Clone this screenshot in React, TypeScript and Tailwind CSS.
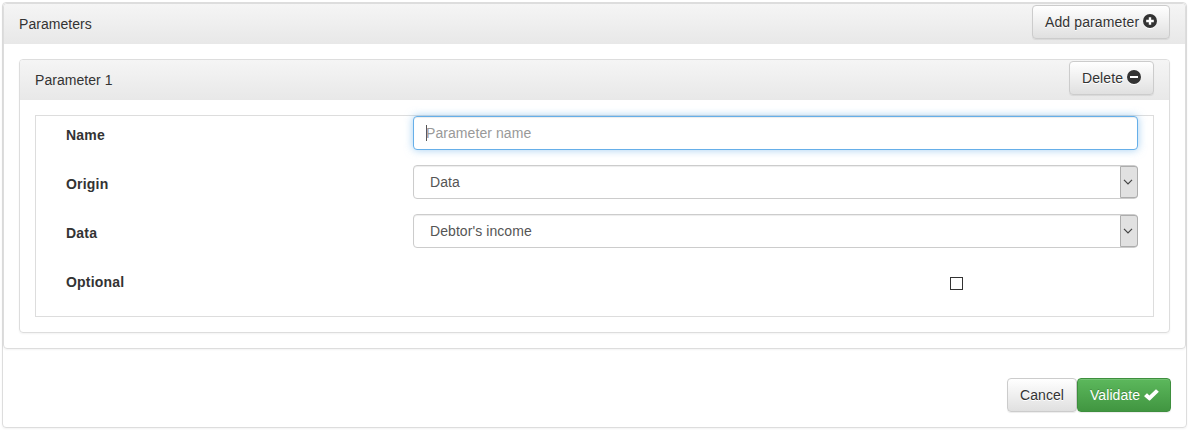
import type { ReactNode } from "react";

const buttonBase =
  "flex h-[34px] shrink-0 items-center rounded-[4px] border pl-3 text-[14px] leading-5 whitespace-nowrap";
const defaultButton =
  "border-[#ccc] bg-gradient-to-b from-white to-[#e0e0e0] text-[#333] [text-shadow:0_1px_0_#fff] shadow-[inset_0_1px_0_rgba(255,255,255,0.15),0_1px_1px_rgba(0,0,0,0.075)]";

function SignIcon({ plus = false }: { plus?: boolean }) {
  return (
    <svg width="14" height="14" viewBox="0 0 14 14" className="relative -top-px drop-shadow-[0_1px_0_#fff]">
      <circle cx="7" cy="7" r="7" fill="#333" />
      <path d={plus ? "M5.8 3.2h2.4v2.6h2.6v2.4H8.2v2.6H5.8V8.2H3.2V5.8h2.6z" : "M3 6h8v2H3z"} fill="#fff" />
    </svg>
  );
}

function CheckIcon() {
  return (
    <svg width="15" height="14" viewBox="0 0 15 14" className="relative -top-[0.5px]">
      <path d="M.4 7.8 2.7 5.5q.3-.3.6 0L5.4 7.6 11.7 1.4q.3-.3.6 0l2.3 2.1q.3.3 0 .6L5.9 12.4q-.4.3-.8 0L.4 8.4q-.3-.3 0-.6z" fill="#fff" />
    </svg>
  );
}

function PanelHeader({ title, children }: { title: string; children: ReactNode }) {
  return (
    <div className="flex h-10 items-start justify-between rounded-t-[3px] bg-gradient-to-b from-[#f5f5f5] to-[#e8e8e8] px-[15px] pt-px">
      <h3 className="mt-[9px] text-[14px] leading-5 tracking-[0.04px]">{title}</h3>
      {children}
    </div>
  );
}

function Row({ label, children }: { label: string; children: ReactNode }) {
  return (
    <div className="flex h-[34px]">
      <div className="w-[347px] shrink-0 pt-[9px] leading-5 font-bold tracking-[0.2px]">{label}</div>
      {children}
    </div>
  );
}

function SelectBox({ value }: { value: string }) {
  return (
    <div className="flex h-[34px] w-[725px] justify-between rounded-[4px] border border-[#ccc] bg-white shadow-[inset_0_1px_1px_rgba(0,0,0,0.075)]">
      <span className="pt-[6px] pl-4 leading-5 tracking-[0.07px] text-[#555]">{value}</span>
      <span className="-mr-px flex h-8 w-[18px] items-center rounded-r-[3px] border border-[#adadad] bg-[#e1e1e1] pl-[2px]">
        <svg width="10" height="6" viewBox="0 0 10 6" fill="none">
          <path d="M1 .8 5 4.8 9 .8" stroke="#444" strokeWidth="1.2" />
        </svg>
      </span>
    </div>
  );
}

export default function App() {
  return (
    <div className="h-[430px] w-[1190px] overflow-hidden bg-white pt-[2px] pl-[2px] font-['Liberation_Sans',Arial,sans-serif] text-[14px] leading-5 text-[#333]">
      <div className="h-[426px] w-[1185px] rounded-[4px] border border-[#ddd] shadow-[0_1px_2px_rgba(0,0,0,0.05)]">
        <section className="h-[346px] rounded-[4px] border border-[#ddd] shadow-[0_1px_2px_rgba(0,0,0,0.05)]">
          <PanelHeader title="Parameters">
            <button className={`${buttonBase} ${defaultButton} w-[138px] gap-[3.5px] tracking-[0.12px]`}>
              Add parameter <SignIcon plus />
            </button>
          </PanelHeader>
          <div className="p-[15px]">
            <section className="h-[274px] rounded-[4px] border border-[#ddd] shadow-[0_1px_2px_rgba(0,0,0,0.05)]">
              <PanelHeader title="Parameter 1">
                <button className={`${buttonBase} ${defaultButton} w-[85px] gap-1 tracking-[0.1px]`}>
                  Delete <SignIcon />
                </button>
              </PanelHeader>
              <div className="p-[15px]">
                <div className="flex h-[202px] flex-col gap-[15px] border border-[#ddd] pl-[30px]">
                  <Row label="Name">
                    <div className="flex h-[34px] w-[725px] items-start rounded-[4px] border border-[#66afe9] bg-white pt-[6px] pl-3 text-[#999] shadow-[inset_0_1px_1px_rgba(0,0,0,0.075),0_0_8px_rgba(102,175,233,0.6)]">
                      <span className="mt-[2px] -mr-px h-4 w-px bg-[#555]" />
                      <span className="tracking-[0.07px]">Parameter name</span>
                    </div>
                  </Row>
                  <Row label="Origin">
                    <SelectBox value="Data" />
                  </Row>
                  <Row label="Data">
                    <SelectBox value="Debtor's income" />
                  </Row>
                  <Row label="Optional">
                    <span className="mt-[14px] ml-[537px] size-[13px] border border-[#333] bg-white" />
                  </Row>
                </div>
              </div>
            </section>
          </div>
        </section>
        <div className="mt-[29px] flex justify-end pr-[15px]">
          <button className={`${buttonBase} ${defaultButton} w-[70px] tracking-[0.07px]`}>Cancel</button>
          <button
            className={`${buttonBase} w-[94px] gap-1 border-[#3e8f3e] bg-gradient-to-b from-[#5cb85c] to-[#419641] tracking-[0.07px] text-white [text-shadow:0_-1px_0_rgba(0,0,0,0.2)] shadow-[inset_0_1px_0_rgba(255,255,255,0.15),0_1px_1px_rgba(0,0,0,0.075)]`}
          >
            Validate <CheckIcon />
          </button>
        </div>
      </div>
    </div>
  );
}
